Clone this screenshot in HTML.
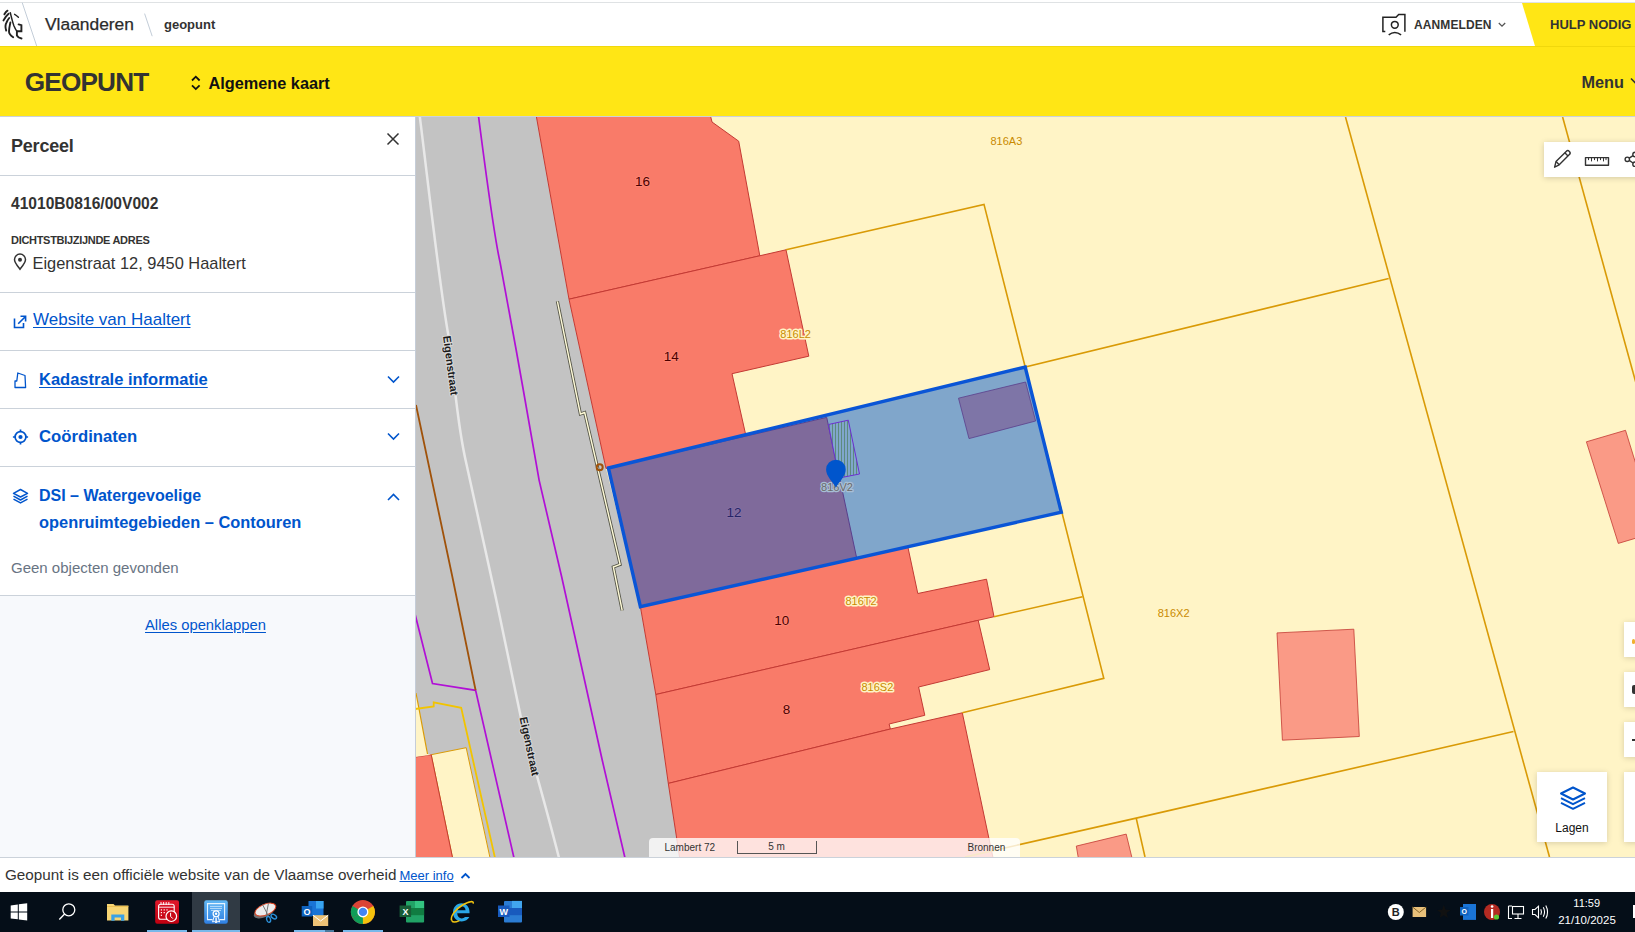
<!DOCTYPE html>
<html><head><meta charset="utf-8">
<style>
*{margin:0;padding:0;box-sizing:border-box}
html,body{width:1635px;height:932px;overflow:hidden;background:#fff;font-family:"Liberation Sans",sans-serif;color:#333332}
.a{position:absolute;white-space:nowrap}
#map{position:absolute;left:415px;top:117px;width:1220px;height:740px;overflow:hidden;background:#fff4c6}
</style></head><body>
<div style="position:absolute;left:0;top:0;width:1635px;height:46px;background:#fff"></div>
<div style="position:absolute;left:0;top:2px;width:1635px;height:1px;background:#dfe2e4"></div>
<svg class="a" style="left:0;top:0" width="40" height="46" viewBox="0 0 40 46">
<g fill="none" stroke="#222" stroke-linecap="round" stroke-width="1.9">
<path d="M4.4,14.3 C5.3,12.6 6.3,11.3 7.5,10.7"/>
<path d="M3.5,20.4 C4.8,17.8 6.8,15.2 8.6,13.7"/>
<path d="M6.2,30.6 C5.2,27.5 5.3,24.5 6.5,22.5 C7.4,20.6 8.3,19.1 9.2,18"/>
<path d="M13.2,37.3 C10.6,35.5 9.0,33.8 9.0,31.5 C9.0,28.5 9.8,25.2 10.4,22.4"/>
<path d="M10.3,12.8 C11.5,17.5 12.7,22.6 14.0,26 C14.9,28.2 15.9,30.0 16.9,31.2" stroke-width="1.5"/>
<path d="M14.6,14.3 C16.0,15.0 17.3,16.2 18.4,17.3" stroke-width="1.4"/>
<path d="M18.6,24.4 L21.4,25.2 L21.4,31.2 L16.9,31.2 L16.9,35.5 C17.8,37.2 19.8,38.2 21.5,38.5"/>
</g>
<path d="M22.2,2.6 L36.7,46" stroke="#c3cdd8" stroke-width="1"/>
</svg>
<div class="a" style="left:45px;top:16.07px;font-size:17.4px;line-height:17.4px;font-weight:400;color:#2b2b2b;-webkit-text-stroke:0.25px #2b2b2b">Vlaanderen</div>
<svg class="a" style="left:140px;top:10px" width="16" height="30"><path d="M4.6,3.6 L12.2,26.2" stroke="#c3cdd8" stroke-width="1"/></svg>
<div class="a" style="left:164px;top:17.70px;font-size:13px;line-height:13px;font-weight:700;color:#333332;">geopunt</div>
<svg class="a" style="left:1375px;top:8px" width="40" height="32" viewBox="1375 8 40 32">
<g fill="none" stroke="#222" stroke-width="1.5">
<path d="M1385.3,31.4 L1382.9,31.4 L1382.9,17.3 L1396,17.3 L1398.7,14.5 L1404.9,14.5 L1404.9,31.7"/>
<circle cx="1394.8" cy="24.8" r="3.4"/>
<path d="M1388.7,34.8 Q1394.8,30 1401.1,34.8"/>
</g></svg>
<div class="a" style="left:1414px;top:19.14px;font-size:12px;line-height:12px;font-weight:700;color:#333332;letter-spacing:0.1px">AANMELDEN</div>
<svg class="a" style="left:1497px;top:20px" width="12" height="10"><path d="M1.8,3 L5,6.2 L8.2,3" fill="none" stroke="#555" stroke-width="1.3"/></svg>
<svg class="a" style="left:1522px;top:3px" width="113" height="43"><polygon points="0,0 113,0 113,43 13,43" fill="#ffe615"/></svg>
<div class="a" style="left:1550px;top:18.30px;font-size:13px;line-height:13px;font-weight:700;color:#333332;letter-spacing:0px">HULP NODIG</div>
<div style="position:absolute;left:0;top:46px;width:1635px;height:70px;background:#ffe615"></div>
<div style="position:absolute;left:0;top:46px;width:1635px;height:1px;background:#f0d80c"></div>
<div style="position:absolute;left:0;top:116px;width:1635px;height:1px;background:#cbd2da"></div>
<div class="a" style="left:24.8px;top:68.62px;font-size:26.2px;line-height:26.2px;font-weight:700;color:#333332;letter-spacing:-0.85px">GEOPUNT</div>
<svg class="a" style="left:188px;top:74px" width="16" height="18"><path d="M4,6.5 L7.8,2.7 L11.6,6.5 M4,11.3 L7.8,15.1 L11.6,11.3" fill="none" stroke="#111" stroke-width="1.8"/></svg>
<div class="a" style="left:208.5px;top:75.20px;font-size:16.3px;line-height:16.3px;font-weight:700;color:#111;">Algemene kaart</div>
<div class="a" style="left:1581.5px;top:73.50px;font-size:16.3px;line-height:16.3px;font-weight:700;color:#333332;">Menu</div>
<svg class="a" style="left:1630px;top:76px" width="10" height="10"><path d="M1,2.5 L5,6.5 L9,2.5" fill="none" stroke="#333" stroke-width="1.6"/></svg>
<div style="position:absolute;left:0;top:117px;width:415px;height:740px;background:#f7f9fc"></div>
<div style="position:absolute;left:0;top:117px;width:415px;height:478px;background:#fff"></div>
<div style="position:absolute;left:0;top:175px;width:415px;height:1px;background:#cbd2da"></div>
<div style="position:absolute;left:0;top:292px;width:415px;height:1px;background:#cbd2da"></div>
<div style="position:absolute;left:0;top:350px;width:415px;height:1px;background:#cbd2da"></div>
<div style="position:absolute;left:0;top:408px;width:415px;height:1px;background:#cbd2da"></div>
<div style="position:absolute;left:0;top:466px;width:415px;height:1px;background:#cbd2da"></div>
<div style="position:absolute;left:0;top:595px;width:415px;height:1px;background:#cbd2da"></div>
<div class="a" style="left:11px;top:136.76px;font-size:18px;line-height:18px;font-weight:700;color:#333332;letter-spacing:-0.2px">Perceel</div>
<svg class="a" style="left:383px;top:129px" width="20" height="20"><path d="M4.5,4.5 L15.5,15.5 M15.5,4.5 L4.5,15.5" stroke="#333" stroke-width="1.5"/></svg>
<div class="a" style="left:11px;top:195.79px;font-size:15.6px;line-height:15.6px;font-weight:700;color:#333332;">41010B0816/00V002</div>
<div class="a" style="left:11px;top:234.69px;font-size:11px;line-height:11px;font-weight:700;color:#333332;letter-spacing:-0.3px">DICHTSTBIJZIJNDE ADRES</div>
<svg class="a" style="left:10px;top:251px" width="20" height="22"><path d="M10,18.2 C7.5,15 4.5,11.8 4.5,8.6 A5.5,5.5 0 0 1 15.5,8.6 C15.5,11.8 12.5,15 10,18.2 Z" fill="none" stroke="#333" stroke-width="1.5"/><circle cx="10" cy="8.7" r="2" fill="#333"/></svg>
<div class="a" style="left:32.5px;top:254.92px;font-size:16.4px;line-height:16.4px;font-weight:400;color:#333332;">Eigenstraat 12, 9450 Haaltert</div>
<svg class="a" style="left:10px;top:312px" width="20" height="20"><path d="M4.5,6.5 L4.5,15.5 L13.5,15.5 L13.5,11 M8.2,11.8 L15,5 M10.5,4.3 L15.6,4.3 L15.6,9.4" fill="none" stroke="#0055cc" stroke-width="1.6"/></svg>
<div class="a" style="left:33px;top:311.41px;font-size:17px;line-height:17px;font-weight:400;color:#0055cc;text-decoration:underline;text-underline-offset:2px">Website van Haaltert</div>
<svg class="a" style="left:10px;top:368px" width="20" height="24"><path d="M5,19.5 L5,13 L6.8,13 L7.8,5 L15,7.5 L15.6,19.5 Z" fill="none" stroke="#0055cc" stroke-width="1.3" stroke-linejoin="round"/></svg>
<div class="a" style="left:39px;top:370.63px;font-size:16.5px;line-height:16.5px;font-weight:700;color:#0055cc;text-decoration:underline;text-underline-offset:2px">Kadastrale informatie</div>
<svg class="a" style="left:386px;top:374.5px" width="16" height="10"><path d="M2,1.5 L7.5,7 L13,1.5" fill="none" stroke="#0055cc" stroke-width="1.6"/></svg>
<svg class="a" style="left:10px;top:427px" width="22" height="22"><g fill="none" stroke="#0055cc" stroke-width="1.7"><circle cx="10.5" cy="10" r="5.4"/><path d="M10.5,2.4 L10.5,4.6 M10.5,15.4 L10.5,17.6 M2.9,10 L5.1,10 M15.9,10 L18.1,10"/></g><circle cx="10.5" cy="10" r="2.1" fill="#0055cc"/></svg>
<div class="a" style="left:39px;top:428.86px;font-size:16.7px;line-height:16.7px;font-weight:700;color:#0055cc;">Coördinaten</div>
<svg class="a" style="left:386px;top:432px" width="16" height="10"><path d="M2,1.5 L7.5,7 L13,1.5" fill="none" stroke="#0055cc" stroke-width="1.6"/></svg>
<svg class="a" style="left:10px;top:486px" width="22" height="20"><g fill="none" stroke="#0055cc" stroke-width="1.5" stroke-linejoin="round"><path d="M10.5,3.5 L17.5,7.3 L10.5,11 L3.5,7.3 Z"/><path d="M3.5,10.2 L10.5,14 L17.5,10.2"/><path d="M3.5,13.1 L10.5,16.9 L17.5,13.1"/></g></svg>
<div class="a" style="left:39px;top:487.76px;font-size:16px;line-height:16px;font-weight:700;color:#0055cc;">DSI – Watergevoelige</div>
<div class="a" style="left:39px;top:514.12px;font-size:16.4px;line-height:16.4px;font-weight:700;color:#0055cc;">openruimtegebieden – Contouren</div>
<svg class="a" style="left:386px;top:492.5px" width="16" height="10"><path d="M2,7 L7.5,1.5 L13,7" fill="none" stroke="#0055cc" stroke-width="1.6"/></svg>
<div class="a" style="left:11px;top:560.30px;font-size:15px;line-height:15px;font-weight:400;color:#687483;">Geen objecten gevonden</div>
<div class="a" style="left:145px;top:618.47px;font-size:14.8px;line-height:14.8px;font-weight:400;color:#0055cc;text-decoration:underline;text-underline-offset:2px">Alles openklappen</div><div id="map"><svg width="1220" height="740" viewBox="415 117 1220 740" style="position:absolute;left:0;top:0">
<rect x="415" y="117" width="1220" height="740" fill="#fff4c6"/>
<polygon points="415,117 536.5,117 569,299.2 606,468.5 640.4,606.7 655.8,694.5 668.3,783.4 680,857 490,857 466.2,747.7 431.2,754.7 427.5,754 416,693 415,693" fill="#c3c3c3"/>
<polygon points="431.2,754.7 466.2,747.7 490.5,860 453,860" fill="#fff4c6" stroke="#d99a06" stroke-width="1"/>
<polygon points="535.2,110 709,110 712,122 738.7,141.2 759.8,255.8 569,299.2" fill="#f97b69" stroke="#c33a34" stroke-width="1"/>
<polygon points="569,299.2 786,249.8 808.8,356.2 732,373.7 745.7,434.7 606,468.5" fill="#f97b69" stroke="#c33a34" stroke-width="1"/>
<polygon points="640.4,606.7 907.8,546.7 917.8,593.5 986.5,579.2 994,616.7 655.8,694.5" fill="#f97b69" stroke="#c33a34" stroke-width="1"/>
<polygon points="655.8,694.5 978.2,620.3 989.7,669.6 918.6,687 924.8,715.3 889.1,724 890.4,729 668.3,783.4" fill="#f97b69" stroke="#c33a34" stroke-width="1"/>
<polygon points="668.3,783.4 890.4,729 962.3,712.8 993.5,860 680,860" fill="#f97b69" stroke="#c33a34" stroke-width="1"/>
<polygon points="414,757.2 431.2,754.7 453,860 414,860" fill="#f97b69" stroke="#c33a34" stroke-width="1"/>
<polygon points="414,693 416,693 427.5,754 431.2,754.7 414,757.2" fill="#fff4c6" stroke="none"/>
<polyline points="416,693 427.5,754" fill="none" stroke="#d99a06" stroke-width="1.2"/>
<polygon points="1277,632.9 1353.8,629.2 1359.3,736.5 1282.4,740.2" fill="#fa9a86" stroke="#c33a34" stroke-width="0.8"/>
<polygon points="1586.4,441.8 1625.5,430.3 1656.8,531.9 1618.3,543.4" fill="#fa9a86" stroke="#c33a34" stroke-width="0.8"/>
<polygon points="1076.3,846.1 1126.2,834.1 1133,862 1079,862" fill="#fa9a86" stroke="#c33a34" stroke-width="0.8"/>
<polyline points="786,249.8 984,204.4 1025.2,367 1388.7,278.5" fill="none" stroke="#d99a06" stroke-width="1.6"/>
<polyline points="1345.5,117 1549.5,857" fill="none" stroke="#d99a06" stroke-width="1.6"/>
<polyline points="1562.6,117 1650,434" fill="none" stroke="#d99a06" stroke-width="1.6"/>
<polyline points="1025.2,367 1103.8,678.3 962.3,712.8" fill="none" stroke="#d99a06" stroke-width="1.6"/>
<polyline points="994,616.7 1082.5,596.7" fill="none" stroke="#d99a06" stroke-width="1.6"/>
<polyline points="965,857 1136.2,818.1 1513.5,731.5" fill="none" stroke="#d99a06" stroke-width="1.6"/>
<polyline points="1136.2,818.1 1145,857" fill="none" stroke="#d99a06" stroke-width="1.6"/>
<path d="M419,110 C429,190 440,290 448.5,336" fill="none" stroke="#e8e8e8" stroke-width="2.5"/>
<path d="M455.5,395 C459,425 461,440 466,462 L496.3,600 L521,718" fill="none" stroke="#e8e8e8" stroke-width="2.5"/>
<path d="M537,776 C545,805 552,830 559,858" fill="none" stroke="#e8e8e8" stroke-width="2.5"/>
<path d="M477.5,110 L478.6,117 C488,190 495,240 500,262 L516,349 L523.3,390 L539.1,480.1 L561.7,577 L602.2,760 L625,858" fill="none" stroke="#b10fd6" stroke-width="1.7"/>
<polyline points="415,614 432.5,683.5 475.6,690.3 514,858" fill="none" stroke="#b10fd6" stroke-width="1.7"/>
<polyline points="416,405 452.4,577 475.6,690.3" fill="none" stroke="#a0520a" stroke-width="1.8"/>
<polyline points="415,709 433.7,706.5 433.7,702.3 461.2,707.8 495,858" fill="none" stroke="#f2c400" stroke-width="1.8"/>
<polyline points="557.4,301.3 580.4,414 584.7,412.5 620.1,564.4 613.3,567 622.2,610.5" fill="none" stroke="#555548" stroke-width="3.2" stroke-miterlimit="10"/>
<polyline points="557.4,301.3 580.4,414 584.7,412.5 620.1,564.4 613.3,567 622.2,610.5" fill="none" stroke="#fffbd8" stroke-width="1.4" stroke-miterlimit="10"/>
<polygon points="608.4,468 1025.2,367 1061.3,512.2 640.4,606.7" fill="#80a6cb"/>
<polygon points="608.4,468 826.7,417.4 856.7,558.1 640.4,606.7" fill="#7f6a9b" stroke="#5a3f8c" stroke-width="1"/>
<polygon points="958.5,398.2 1025.6,382 1035.6,421 969,438.6" fill="#7e75a7" stroke="#5a3f8c" stroke-width="0.8"/>
<defs><pattern id="hat" width="3" height="10" patternUnits="userSpaceOnUse"><rect width="3" height="10" fill="#80a6cb"/><rect x="1" width="1" height="10" fill="#5d8b7e"/></pattern></defs>
<polygon points="828.4,424.5 848.3,420.2 859.5,474 839,478" fill="url(#hat)" stroke="#6b2fd0" stroke-width="1"/>
<polygon points="608.4,468 1025.2,367 1061.3,512.2 640.4,606.7" fill="none" stroke="#0a55d6" stroke-width="3.4" stroke-linejoin="miter"/>
<circle cx="599.7" cy="467.3" r="3" fill="none" stroke="#a0520a" stroke-width="2"/>
<text x="642.6" y="181.4" font-family="Liberation Sans" font-size="13.5" font-weight="normal" text-anchor="middle" dominant-baseline="central" fill="none" stroke="#ff8a78" stroke-width="1.5" stroke-linejoin="round">16</text><text x="642.6" y="181.4" font-family="Liberation Sans" font-size="13.5" font-weight="normal" text-anchor="middle" dominant-baseline="central" fill="#4a0000">16</text>
<text x="671.3" y="356.7" font-family="Liberation Sans" font-size="13.5" font-weight="normal" text-anchor="middle" dominant-baseline="central" fill="none" stroke="#ff8a78" stroke-width="1.5" stroke-linejoin="round">14</text><text x="671.3" y="356.7" font-family="Liberation Sans" font-size="13.5" font-weight="normal" text-anchor="middle" dominant-baseline="central" fill="#4a0000">14</text>
<text x="734" y="512.2" font-family="Liberation Sans" font-size="13.5" font-weight="normal" text-anchor="middle" dominant-baseline="central" fill="none" stroke="#8672a6" stroke-width="1.5" stroke-linejoin="round">12</text><text x="734" y="512.2" font-family="Liberation Sans" font-size="13.5" font-weight="normal" text-anchor="middle" dominant-baseline="central" fill="#262466">12</text>
<text x="781.8" y="620.4" font-family="Liberation Sans" font-size="13.5" font-weight="normal" text-anchor="middle" dominant-baseline="central" fill="none" stroke="#ff8a78" stroke-width="1.5" stroke-linejoin="round">10</text><text x="781.8" y="620.4" font-family="Liberation Sans" font-size="13.5" font-weight="normal" text-anchor="middle" dominant-baseline="central" fill="#4a0000">10</text>
<text x="786.4" y="709.8" font-family="Liberation Sans" font-size="13.5" font-weight="normal" text-anchor="middle" dominant-baseline="central" fill="none" stroke="#ff8a78" stroke-width="1.5" stroke-linejoin="round">8</text><text x="786.4" y="709.8" font-family="Liberation Sans" font-size="13.5" font-weight="normal" text-anchor="middle" dominant-baseline="central" fill="#4a0000">8</text>
<text x="1006.4" y="141" font-family="Liberation Sans" font-size="11" font-weight="normal" text-anchor="middle" dominant-baseline="central" fill="#c98a00">816A3</text>
<text x="1173.6" y="613" font-family="Liberation Sans" font-size="11" font-weight="normal" text-anchor="middle" dominant-baseline="central" fill="#c98a00">816X2</text>
<text x="795.6" y="334" font-family="Liberation Sans" font-size="11" font-weight="normal" text-anchor="middle" dominant-baseline="central" fill="none" stroke="#fff4c6" stroke-width="3" stroke-linejoin="round">816L2</text><text x="795.6" y="334" font-family="Liberation Sans" font-size="11" font-weight="normal" text-anchor="middle" dominant-baseline="central" fill="#c98a00">816L2</text>
<text x="861" y="601.2" font-family="Liberation Sans" font-size="11" font-weight="normal" text-anchor="middle" dominant-baseline="central" fill="none" stroke="#fff4c6" stroke-width="3" stroke-linejoin="round">816T2</text><text x="861" y="601.2" font-family="Liberation Sans" font-size="11" font-weight="normal" text-anchor="middle" dominant-baseline="central" fill="#c98a00">816T2</text>
<text x="877.4" y="687.3" font-family="Liberation Sans" font-size="11" font-weight="normal" text-anchor="middle" dominant-baseline="central" fill="none" stroke="#fff4c6" stroke-width="3" stroke-linejoin="round">816S2</text><text x="877.4" y="687.3" font-family="Liberation Sans" font-size="11" font-weight="normal" text-anchor="middle" dominant-baseline="central" fill="#c98a00">816S2</text>
<text x="450.8" y="365.4" font-family="Liberation Sans" font-size="11" font-weight="bold" text-anchor="middle" dominant-baseline="central" fill="none" stroke="#d8d8d8" stroke-width="2" stroke-linejoin="round" transform="rotate(82.5 450.8 365.4)">Eigenstraat</text><text x="450.8" y="365.4" font-family="Liberation Sans" font-size="11" font-weight="bold" text-anchor="middle" dominant-baseline="central" fill="#1a1a1a" transform="rotate(82.5 450.8 365.4)">Eigenstraat</text>
<text x="529.7" y="746.2" font-family="Liberation Sans" font-size="11" font-weight="bold" text-anchor="middle" dominant-baseline="central" fill="none" stroke="#d8d8d8" stroke-width="2" stroke-linejoin="round" transform="rotate(78 529.7 746.2)">Eigenstraat</text><text x="529.7" y="746.2" font-family="Liberation Sans" font-size="11" font-weight="bold" text-anchor="middle" dominant-baseline="central" fill="#1a1a1a" transform="rotate(78 529.7 746.2)">Eigenstraat</text>
<text x="837" y="486.9" font-family="Liberation Sans" font-size="11" font-weight="normal" text-anchor="middle" dominant-baseline="central" fill="none" stroke="#a8bfd5" stroke-width="2.5" stroke-linejoin="round">816V2</text><text x="837" y="486.9" font-family="Liberation Sans" font-size="11" font-weight="normal" text-anchor="middle" dominant-baseline="central" fill="#6a6a6a">816V2</text>
<path d="M835.9,487.4 C832,481 826.1,476 826.1,469.5 A9.8,9.8 0 1 1 845.7,469.5 C845.7,476 839.8,481 835.9,487.4 Z" fill="#0055cc"/>
<rect x="415" y="117" width="1" height="740" fill="#c5cdd8"/>
</svg></div><div style="position:absolute;left:1544px;top:142px;width:100px;height:35px;background:#fff;box-shadow:0 1px 6px rgba(0,0,0,0.18)"></div>
<svg class="a" style="left:1544px;top:142px" width="91" height="35" viewBox="1544 142 91 35">
<g fill="none" stroke="#333" stroke-width="1.4" stroke-linejoin="round">
<path d="M1554.6,167.2 L1556,161.6 L1566.2,151.4 A2.2,2.2 0 0 1 1569.4,154.6 L1559.2,164.8 Z"/>
<path d="M1556,161.6 L1559.2,164.8 M1564.8,152.8 L1568,156"/>
<rect x="1585.5" y="157.6" width="23" height="7.6"/>
<path d="M1588.5,157.6 v2.5 M1591.5,157.6 v3.8 M1594.5,157.6 v2.5 M1597.5,157.6 v3.8 M1600.5,157.6 v2.5 M1603.5,157.6 v3.8 M1606,157.6 v2.5" stroke-width="1"/>
<circle cx="1627.3" cy="159.3" r="2.2"/>
<circle cx="1635" cy="154.5" r="2.2"/>
<circle cx="1635" cy="164.2" r="2.2"/>
<path d="M1629.2,158.2 L1633,155.7 M1629.2,160.4 L1633,163"/>
</g></svg>
<div style="position:absolute;left:1624px;top:622px;width:40px;height:35px;background:#fff;box-shadow:0 1px 6px rgba(0,0,0,0.16)"></div>
<div style="position:absolute;left:1624px;top:672px;width:40px;height:35px;background:#fff;box-shadow:0 1px 6px rgba(0,0,0,0.16)"></div>
<div style="position:absolute;left:1624px;top:722px;width:40px;height:35px;background:#fff;box-shadow:0 1px 6px rgba(0,0,0,0.16)"></div>
<div style="position:absolute;left:1624px;top:772px;width:40px;height:70px;background:#fff;box-shadow:0 1px 6px rgba(0,0,0,0.16)"></div>
<div style="position:absolute;left:1632px;top:639px;width:3px;height:5px;background:#f0b030;border-radius:2px"></div>
<div style="position:absolute;left:1632px;top:685px;width:3px;height:9px;background:#333;border-radius:2px 0 0 2px"></div>
<div style="position:absolute;left:1632px;top:739px;width:3px;height:1.5px;background:#333"></div>
<div style="position:absolute;left:1537px;top:772px;width:70px;height:70px;background:#fff;box-shadow:0 1px 6px rgba(0,0,0,0.16)"></div>
<svg class="a" style="left:1558px;top:784px" width="30" height="30"><g fill="none" stroke="#0055cc" stroke-width="2" stroke-linejoin="round"><path d="M15,3.5 L27,9.5 L15,15.5 L3,9.5 Z"/><path d="M3,14.2 L15,20.2 L27,14.2"/><path d="M3,18.8 L15,24.8 L27,18.8"/></g></svg>
<div class="a" style="left:1372px;width:400px;text-align:center;top:821.84px;font-size:12px;line-height:12px;font-weight:400;color:#111;">Lagen</div>
<div style="position:absolute;left:649px;top:838px;width:371px;height:19px;background:rgba(255,255,255,0.78);border-radius:4px 4px 0 0"></div>
<div class="a" style="left:664.5px;top:842.53px;font-size:10px;line-height:10px;font-weight:400;color:#333;">Lambert 72</div>
<div style="position:absolute;left:737px;top:841px;width:80px;height:13px;border:1px solid #555;border-top:none"></div>
<div class="a" style="left:576.5px;width:400px;text-align:center;top:842.03px;font-size:10px;line-height:10px;font-weight:400;color:#333;">5 m</div>
<div class="a" style="left:967.5px;top:842.53px;font-size:10px;line-height:10px;font-weight:400;color:#333;">Bronnen</div>
<div style="position:absolute;left:0;top:857px;width:1635px;height:35px;background:#fff"></div>
<div style="position:absolute;left:0;top:857px;width:1635px;height:1px;background:#cbd2da"></div>
<div class="a" style="left:5px;top:866.59px;font-size:15.25px;line-height:15.25px;font-weight:400;color:#333332;">Geopunt is een officiële website van de Vlaamse overheid</div>
<div class="a" style="left:399.5px;top:869.00px;font-size:13px;line-height:13px;font-weight:400;color:#0055cc;text-decoration:underline;text-underline-offset:1px">Meer info</div>
<svg class="a" style="left:458.5px;top:870.2px" width="14" height="12"><path d="M2.5,8 L6.5,4 L10.5,8" fill="none" stroke="#0055cc" stroke-width="1.8"/></svg>
<div style="position:absolute;left:0;top:892px;width:1635px;height:40px;background:#050e18"></div>
<div style="position:absolute;left:192px;top:892px;width:48px;height:40px;background:#303a44"></div>
<div style="position:absolute;left:147px;top:930px;width:40px;height:2px;background:#78b8ea"></div>
<div style="position:absolute;left:192px;top:930px;width:48px;height:2px;background:#78b8ea"></div>
<div style="position:absolute;left:294px;top:930px;width:31px;height:2px;background:#78b8ea"></div>
<div style="position:absolute;left:343px;top:930px;width:40px;height:2px;background:#78b8ea"></div>
<div style="position:absolute;left:325px;top:930px;width:9px;height:2px;background:#4a7a9e"></div>
<svg class="a" style="left:0;top:892px" width="1635" height="40" viewBox="0 892 1635 40">
<!-- windows -->
<path d="M10.7,905.5 L17.8,904.5 L17.8,911.4 L10.7,911.4 Z M18.8,904.3 L27.2,903.2 L27.2,911.4 L18.8,911.4 Z M10.7,912.4 L17.8,912.4 L17.8,919.3 L10.7,918.4 Z M18.8,912.4 L27.2,912.4 L27.2,920.4 L18.8,919.4 Z" fill="#fff"/>
<!-- search -->
<circle cx="68.8" cy="909.8" r="6" fill="none" stroke="#fff" stroke-width="1.3"/>
<path d="M64.6,914 L59.3,919.5" stroke="#fff" stroke-width="1.4"/>
<!-- explorer -->
<path d="M107,904 L113.5,904 L115,905.5 L128.4,905.5 L128.4,920.5 L107,920.5 Z" fill="#f7d574"/>
<path d="M107,906.5 L128.4,906.5" stroke="#e9b949" stroke-width="0.8"/>
<path d="M111.3,920.8 L111.3,914.5 L124.3,914.5 L124.3,920.8 L121,920.8 L121,917.5 L114.6,917.5 L114.6,920.8 Z" fill="#3aa1e6"/>
<!-- calendar -->
<defs>
<linearGradient id="gcal" x1="0" y1="0" x2="0" y2="1"><stop offset="0" stop-color="#e0182a"/><stop offset="1" stop-color="#c00010"/></linearGradient>
<linearGradient id="gcert" x1="0" y1="0" x2="0" y2="1"><stop offset="0" stop-color="#62b8f4"/><stop offset="1" stop-color="#2f7fe2"/></linearGradient>
</defs>
<rect x="155.2" y="900.2" width="23.8" height="23.6" rx="2" fill="url(#gcal)"/>
<rect x="158.6" y="904.2" width="15.6" height="15" rx="2" fill="none" stroke="#fff" stroke-width="1.1"/>
<path d="M158.6,907.2 H174.2 M161,902 V905 M163.6,902 V905 M166.2,902 V905 M168.8,902 V905" stroke="#fff" stroke-width="0.9"/>
<g fill="#fff"><rect x="160.8" y="909.3" width="1.2" height="1.2"/><rect x="163.6" y="909.3" width="1.2" height="1.2"/><rect x="166.4" y="909.3" width="1.2" height="1.2"/><rect x="160.8" y="912" width="1.2" height="1.2"/><rect x="163.6" y="912" width="1.2" height="1.2"/><rect x="160.8" y="914.7" width="1.2" height="1.2"/></g>
<circle cx="171.3" cy="916.2" r="5.3" fill="#c80a18" stroke="#fff" stroke-width="1.2"/>
<path d="M170.6,912.8 V916.4 L172.8,918.6" fill="none" stroke="#fff" stroke-width="1"/>
<!-- certificate -->
<rect x="204.2" y="900.2" width="23.6" height="23.6" rx="2.2" fill="url(#gcert)"/>
<path d="M212.6,919.6 H207.5 V903.6 H224.6 V919.6 H219.4" fill="none" stroke="#e6f4ff" stroke-width="1.1"/>
<path d="M210,906.4 H222 M210,908.4 H222 M211,910.4 H221" stroke="#d6ecff" stroke-width="0.8"/>
<circle cx="216.1" cy="913.8" r="3.6" fill="#fff"/>
<circle cx="216.1" cy="913.8" r="2.4" fill="#3f93e8"/>
<circle cx="216.1" cy="913.8" r="1.2" fill="#fff"/>
<path d="M214,916.8 L212.6,922 L214.6,921.3 L215.6,922.8 L216.1,918 L216.6,922.8 L217.6,921.3 L219.6,922 L218.2,916.8" fill="none" stroke="#fff" stroke-width="0.9"/>
<!-- snipping -->
<ellipse cx="263.8" cy="912.3" rx="10.6" ry="5.2" transform="rotate(-22 263.8 912.3)" fill="#8a8a8a" opacity="0.8"/>
<ellipse cx="265.4" cy="909.6" rx="11" ry="5.4" transform="rotate(-22 265.4 909.6)" fill="#ececec" stroke="#d42" stroke-width="1"/>
<path d="M262.5,904.5 L268.2,915.5 M268.4,903.6 L266.2,915" stroke="#6a6a6a" stroke-width="0.9"/>
<ellipse cx="268.6" cy="919.4" rx="1.9" ry="3" transform="rotate(-15 268.6 919.4)" fill="none" stroke="#2b8fd8" stroke-width="1.4"/>
<ellipse cx="273.8" cy="916.6" rx="1.9" ry="3" transform="rotate(-55 273.8 916.6)" fill="none" stroke="#2b8fd8" stroke-width="1.4"/>
<!-- outlook -->
<rect x="308.5" y="901" width="15" height="15" fill="#1a74d6"/>
<rect x="316" y="901" width="7.5" height="7.5" fill="#38a4f0"/>
<rect x="301.7" y="906" width="10.5" height="10.5" fill="#0f62be"/>
<text x="306.9" y="914.6" font-family="Liberation Sans" font-weight="700" font-size="9" fill="#fff" text-anchor="middle">O</text>
<rect x="313" y="915.2" width="15.2" height="10.8" fill="#eec276"/>
<path d="M313,915.2 L320.6,921 L328.2,915.2" fill="none" stroke="#fff" stroke-width="1"/>
<!-- chrome -->
<circle cx="362.9" cy="911.9" r="12" fill="#db4437"/>
<path d="M362.9,911.9 L352.5,917.9 A12,12 0 0 0 362.9,923.9 L373.3,917.9" fill="#0f9d58"/>
<path d="M362.9,911.9 L373.3,905.9 A12,12 0 0 1 362.9,923.9 Z" fill="#f4c20d"/>
<path d="M362.9,911.9 L352.5,917.9 A12,12 0 0 1 352.5,905.9 Z" fill="#0f9d58"/>
<circle cx="362.9" cy="911.9" r="5.5" fill="#fff"/>
<circle cx="362.9" cy="911.9" r="4.2" fill="#4285f4"/>
<!-- excel -->
<rect x="406" y="900.9" width="18.1" height="21.6" rx="1" fill="#21a366"/>
<rect x="406" y="908" width="18.1" height="7.2" fill="#107c41"/>
<rect x="415" y="900.9" width="9.1" height="7.1" fill="#33c481"/>
<rect x="399.6" y="905.5" width="11.5" height="11.5" fill="#185c37"/>
<text x="405.4" y="914.7" font-family="Liberation Sans" font-weight="700" font-size="9" fill="#fff" text-anchor="middle">X</text>
<!-- ie -->
<path d="M453.6,913.2 H469.6 C469.8,906.5 466,903.2 461.6,903.2 C456.6,903.2 453,907.2 453,912.4 C453,917.8 456.8,921.4 461.8,921.4 C465.2,921.4 468,919.8 469.4,917 H464.8 C464,918 463,918.4 461.8,918.4 C459.2,918.4 457.4,916.6 457.2,913.2 Z M457.4,910.2 C457.8,907.8 459.4,906.2 461.6,906.2 C463.8,906.2 465.4,907.8 465.6,910.2 Z" fill="#2aa8e8" fill-rule="evenodd"/>
<path d="M451.8,920.6 C449.8,917 455,909.4 462.6,905 C469.6,901 473.8,900.6 473.2,903.6" fill="none" stroke="#f2c40f" stroke-width="1.6"/>
<path d="M451.8,920.6 C452.8,922.6 456,922.2 459.4,920.6" fill="none" stroke="#f2c40f" stroke-width="1.4"/>
<!-- word -->
<rect x="504" y="900.9" width="18" height="21.6" rx="1" fill="#2b7cd3"/>
<rect x="504" y="908" width="18" height="7.2" fill="#185abd"/>
<rect x="512" y="900.9" width="10" height="7.1" fill="#41a5ee"/>
<rect x="498" y="905.5" width="11.5" height="11.5" fill="#185abd"/>
<text x="503.7" y="914.7" font-family="Liberation Sans" font-weight="700" font-size="9" fill="#fff" text-anchor="middle">W</text>
<!-- tray -->
<circle cx="1395.8" cy="912" r="8" fill="#fff"/>
<text x="1395.8" y="916" font-family="Liberation Sans" font-weight="700" font-size="11" fill="#222" text-anchor="middle">B</text>
<rect x="1412.6" y="907" width="13.5" height="10" fill="#e8c07a"/>
<path d="M1412.6,907 L1419.3,912.5 L1426.1,907" fill="none" stroke="#7a5a20" stroke-width="0.9"/>
<path d="M1443.8,905 L1445.6,909.8 L1450.5,910 L1446.6,913 L1448,918 L1443.8,915.2 L1439.6,918 L1441,913 L1437.1,910 L1442,909.8 Z" fill="#111"/>
<rect x="1463" y="904" width="13" height="15.9" fill="#1a74d6"/>
<rect x="1460" y="907" width="8.5" height="8.5" fill="#0f62be"/>
<text x="1464.3" y="914" font-family="Liberation Sans" font-weight="700" font-size="7" fill="#fff" text-anchor="middle">O</text>
<circle cx="1492" cy="912" r="8" fill="#b32a22"/>
<rect x="1491" y="909" width="2.2" height="9" fill="#fff"/>
<circle cx="1492.1" cy="906.5" r="1.3" fill="#fff"/>
<circle cx="1496.5" cy="917" r="2.6" fill="#5ac832"/>
<g fill="none" stroke="#fff" stroke-width="1.1">
<rect x="1512.5" y="906.5" width="11" height="7.5"/>
<path d="M1518,914 V918 M1514.5,918.5 H1521.5 M1508.5,906 H1512 M1508.5,906 V918.5 H1512"/>
</g>
<path d="M1532.5,909.5 H1535 L1538.5,906.2 V917.8 L1535,914.5 H1532.5 Z" fill="none" stroke="#fff" stroke-width="1.1"/>
<path d="M1540.8,909.2 Q1542.2,912 1540.8,914.8 M1543.3,907.3 Q1545.8,912 1543.3,916.7 M1545.8,905.4 Q1549.3,912 1545.8,918.6" fill="none" stroke="#fff" stroke-width="1.1"/>
<rect x="1633" y="905" width="2" height="13" fill="#fff"/>
</svg>
<div class="a" style="left:1386.7px;width:400px;text-align:center;top:897.69px;font-size:11px;line-height:11px;font-weight:400;color:#fff;">11:59</div>
<div class="a" style="left:1387px;width:400px;text-align:center;top:915.47px;font-size:11.5px;line-height:11.5px;font-weight:400;color:#fff;">21/10/2025</div></body></html>
